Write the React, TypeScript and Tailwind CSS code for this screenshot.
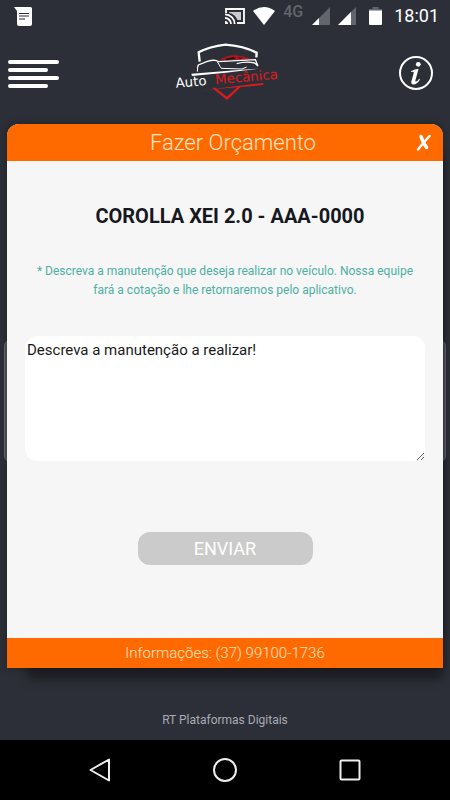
function SignalIcon({ bars }: { bars: string }) {
  return (
    <svg width="18" height="18" viewBox="0 0 18 18" aria-hidden="true">
      <path d="M18 0V18H0Z" fill="#63656d" />
      <path d={bars} fill="#fff" />
    </svg>
  );
}

function StatusBar() {
  return (
    <div className="flex h-8 items-center pr-[11px] pl-[14px] text-white">
      <svg width="18" height="19" viewBox="0 0 18 19" aria-hidden="true">
        <path d="M0 0H16.5Q18 0 18 1.5V17Q18 19 16 19H5Q3 19 3 17V4Z" fill="#fff" />
        <path d="M5 6.5H15M5 9H15M5 12H11" stroke="#2d2f38" strokeWidth="1.2" />
      </svg>
      <div className="ml-auto flex items-center">
        <svg width="20" height="16" viewBox="0 0 20 16" fill="none" stroke="#fff" aria-hidden="true">
          <path d="M1 5V1H19V15H12" strokeWidth="1.8" />
          <path d="M4 4H16V12H12.5Q10 6 4 4.8Z" fill="#c9cacd" stroke="none" />
          <path d="M0 6.400A9.600 9.600 0 0 1 9.600 16M0 10A6 6 0 0 1 6 16" strokeWidth="1.8" />
          <path d="M0 13A3 3 0 0 1 3 16H0Z" fill="#fff" stroke="none" />
        </svg>
        <svg className="ml-2" width="22" height="18" viewBox="0 0 22 18" aria-hidden="true">
          <path d="M0 4Q11-4 22 4L11 18Z" fill="#fff" />
        </svg>
        <span className="mb-2 ml-2 text-base leading-4 font-medium text-[#63656d]">4G</span>
        <div className="ml-[9px] flex gap-2">
          <SignalIcon bars="M7 11V18H0Z" />
          <SignalIcon bars="M13 5V18H0Z" />
        </div>
        <svg className="ml-[13px]" width="13" height="18" viewBox="0 0 13 18" aria-hidden="true">
          <path d="M3.5 0H9.5V2H13V5H0V2H3.5Z" fill="#63656d" />
          <path d="M0 3.5H13V17Q13 18 12 18H1Q0 18 0 17Z" fill="#fff" />
        </svg>
        <span className="ml-3 text-lg leading-5">18:01</span>
      </div>
    </div>
  );
}

function Logo() {
  return (
    <svg
      width="120"
      height="70"
      viewBox="0 0 360 210"
      fill="none"
      role="img"
      aria-label="Auto Mecânica"
    >
      {/* shield */}
      <path d="M101 80L98 52Q130 35 178 29Q232 33 272 53L271 67" stroke="#fff" strokeWidth="7" />
      <path d="M138 158L147 158L183 185L216 155L228 152L183 195Z" fill="#e01b1b" />
      <path d="M98 167L292 144L292 150L140 163Z" fill="#e01b1b" />
      {/* car */}
      <path d="M160 76Q180 61 208 61Q232 62 253 71L228 75Z" fill="#b3151c" />
      <path d="M178 71L203 66L210 72L180 75ZM216 66L232 68L222 73Z" fill="#16161a" />
      <path
        d="M94 98L97 90L124 79Q148 72 158 80L268 74L276 93L266 84Q240 78 212 86"
        stroke="#fff"
        strokeWidth="4"
      />
      <path d="M154 80L162 94L166 100L228 102L242 96" stroke="#fff" strokeWidth="3" />
      <path d="M95 98L94 110" stroke="#fff" strokeWidth="3" />
      <path d="M76 116L180 108L278 101L180 113L78 123Z" fill="#fff" />
      <g
        transform="rotate(-5 31 158)"
        fontFamily="'DejaVu Sans', sans-serif"
        fontSize="40"
      >
        <text x="30" y="158" fill="#fff">Auto</text>
        <text x="149" y="158" fill="#e01b1b">Mecânica</text>
      </g>
    </svg>
  );
}

function Header() {
  return (
    <header className="flex h-[92px] items-start justify-between pr-[17px] pl-2">
      <button type="button" aria-label="Menu" className="mt-7 flex w-[51px] flex-col gap-1">
        <span className="h-1 w-full rounded-xs bg-white" />
        <span className="h-1 w-10 rounded-xs bg-white" />
        <span className="h-1 w-full rounded-xs bg-white" />
        <span className="h-1 w-10 rounded-xs bg-white" />
      </button>
      <div className="mt-[3px] ml-0.5">
        <Logo />
      </div>
      <button type="button" aria-label="Informações" className="mt-6 ml-2">
        <svg width="34" height="34" viewBox="0 0 34 34" fill="none">
          <circle cx="17" cy="17" r="16" stroke="#fff" strokeWidth="2" />
          <circle cx="19.3" cy="8.3" r="2.4" fill="#fff" />
          <path
            d="M12 15.2Q15.500 13 19.600 12.700L16.500 24Q16 26 17.200 25.500Q18.800 24.700 20.300 22.800L21 23.400Q18 28.500 14.300 28.500Q11.700 28.300 12.400 25.300L14.700 17Q15.200 15 12.300 16Z"
            fill="#fff"
          />
        </svg>
      </button>
    </header>
  );
}

function QuoteCard() {
  return (
    <section className="relative rounded-t-xl bg-[#f6f6f6] shadow-[10px_22px_10px_-10px_rgba(0,0,0,0.35),0_0_8px_rgba(0,0,0,0.3)]">
      <div className="flex h-[37px] items-center rounded-t-xl bg-[#ff6a00] px-3">
        <h1 className="ml-8 flex-1 text-center text-[22px] leading-8 font-light text-[#ffe6c4]">
          Fazer Orçamento
        </h1>
        <button type="button" aria-label="Fechar" className="w-4">
          <svg width="16" height="17" viewBox="0 0 16 17" fill="none" stroke="#fff">
            <path d="M3 15.500Q8 9 14.500 2" strokeWidth="2.500" strokeLinecap="round" />
            <path d="M6 2.500Q7.500 8 11.500 13.500" strokeWidth="3.500" strokeLinecap="round" />
          </svg>
        </button>
      </div>

      <form
        className="flex flex-col items-center px-[18px] pt-10 pb-[73px]"
        onSubmit={(e) => e.preventDefault()}
      >
        <h2 className="pl-2.5 text-xl leading-[30px] font-bold text-[#16181f]">
          COROLLA XEI 2.0 - AAA-0000
        </h2>
        <p className="mt-[31px] px-2 text-center text-xs leading-[19px] text-[#4db0a4]">
          * Descreva a manutenção que deseja realizar no veículo. Nossa equipe
          fará a cotação e lhe retornaremos pelo aplicativo.
        </p>
        <textarea
          aria-label="Descreva a manutenção a realizar!"
          placeholder="Descreva a manutenção a realizar!"
          className="mt-9 block h-[125px] w-full rounded-xl bg-white px-0.5 py-1 text-[15px] leading-5 text-[#1a1a1a] outline-none placeholder:text-[#1a1a1a]"
        />
        <button
          type="submit"
          className="mt-[71px] h-[33px] w-[175px] rounded-xl bg-[#cbcbcb] text-lg leading-5 text-white"
        >
          ENVIAR
        </button>
      </form>

      <p className="bg-[#ff6a00] text-center text-[15px] leading-[30px] font-light text-[#ffe6c4]">
        Informações: (37) 99100-1736
      </p>
    </section>
  );
}

export default function App() {
  return (
    <div className="flex min-h-screen flex-col bg-[#2d2f38] font-['Roboto',sans-serif]">
      <StatusBar />
      <Header />
      <main className="relative px-[7px]">
        {/* list item that stays partly visible behind the dialog */}
        <div className="absolute inset-x-1 top-[216px] h-[122px] rounded-md border border-[#686a70] bg-[#50535a]" />
        <QuoteCard />
      </main>
      <footer className="flex flex-1 items-center justify-center pt-8 text-xs leading-4 text-[#a9abb2]">
        RT Plataformas Digitais
      </footer>
      <nav className="flex h-[60px] items-center justify-center gap-[101px] bg-black">
        <button type="button" aria-label="Voltar">
          <svg width="24" height="24" viewBox="0 0 24 24" fill="none" stroke="#eee" strokeWidth="2">
            <path d="M21 1.500V22.500L2.500 12Z" strokeLinejoin="round" />
          </svg>
        </button>
        <button type="button" aria-label="Início">
          <svg width="24" height="24" viewBox="0 0 24 24" fill="none" stroke="#eee" strokeWidth="2">
            <circle cx="12" cy="12" r="11" />
          </svg>
        </button>
        <button type="button" aria-label="Recentes">
          <svg width="24" height="24" viewBox="0 0 24 24" fill="none" stroke="#eee" strokeWidth="2">
            <rect x="2.500" y="2.500" width="19" height="19" rx="1" />
          </svg>
        </button>
      </nav>
    </div>
  );
}
